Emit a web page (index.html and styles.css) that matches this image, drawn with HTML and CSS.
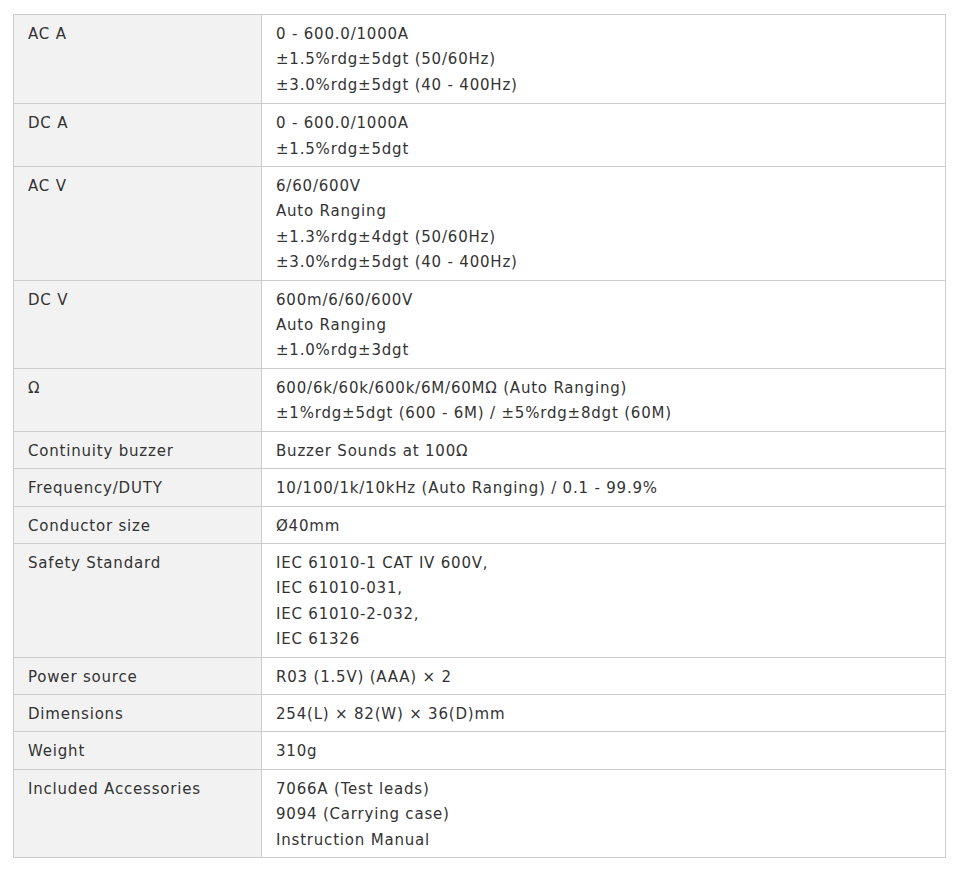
FILE: index.html
```html
<!DOCTYPE html>
<html>
<head>
<meta charset="utf-8">
<link rel="stylesheet" href="styles.css">
</head>
<body>
<table class="spec">
<tr><th>AC A</th><td>0 - 600.0/1000A<br>±1.5%rdg±5dgt (50/60Hz)<br>±3.0%rdg±5dgt (40 - 400Hz)</td></tr>
<tr><th>DC A</th><td>0 - 600.0/1000A<br>±1.5%rdg±5dgt</td></tr>
<tr><th>AC V</th><td>6/60/600V<br>Auto Ranging<br>±1.3%rdg±4dgt (50/60Hz)<br>±3.0%rdg±5dgt (40 - 400Hz)</td></tr>
<tr><th>DC V</th><td>600m/6/60/600V<br>Auto Ranging<br>±1.0%rdg±3dgt</td></tr>
<tr><th>Ω</th><td>600/6k/60k/600k/6M/60MΩ (Auto Ranging)<br>±1%rdg±5dgt (600 - 6M) / ±5%rdg±8dgt (60M)</td></tr>
<tr><th>Continuity buzzer</th><td>Buzzer Sounds at 100Ω</td></tr>
<tr><th>Frequency/DUTY</th><td>10/100/1k/10kHz (Auto Ranging) / 0.1 - 99.9%</td></tr>
<tr><th>Conductor size</th><td>Ø40mm</td></tr>
<tr><th>Safety Standard</th><td>IEC 61010-1 CAT IV 600V,<br>IEC 61010-031,<br>IEC 61010-2-032,<br>IEC 61326</td></tr>
<tr><th>Power source</th><td>R03 (1.5V) (AAA) × 2</td></tr>
<tr><th>Dimensions</th><td>254(L) × 82(W) × 36(D)mm</td></tr>
<tr><th>Weight</th><td>310g</td></tr>
<tr><th>Included Accessories</th><td>7066A (Test leads)<br>9094 (Carrying case)<br>Instruction Manual</td></tr>
</table>
</body>
</html>
```
FILE: styles.css
```css
html, body {
  margin: 0;
  padding: 0;
  background: #fff;
}
body {
  padding: 14px 13px 0 13px;
  font-family: "DejaVu Sans", Verdana, sans-serif;
  font-size: 15px;
  letter-spacing: 0.8px;
  color: #333;
}
.spec {
  width: 933px;
  border-collapse: collapse;
}
.spec th, .spec td {
  border: 1px solid #ccc;
  vertical-align: top;
  text-align: left;
  font-weight: normal;
  line-height: 25.4px;
  padding: 7px 14px 4px 14px;
}
.spec tr:first-child th, .spec tr:first-child td {
  padding-bottom: 5px;
}
.spec th {
  width: 219px;
  background: #f2f2f2;
}
.spec td {
  background: #fff;
}
```
